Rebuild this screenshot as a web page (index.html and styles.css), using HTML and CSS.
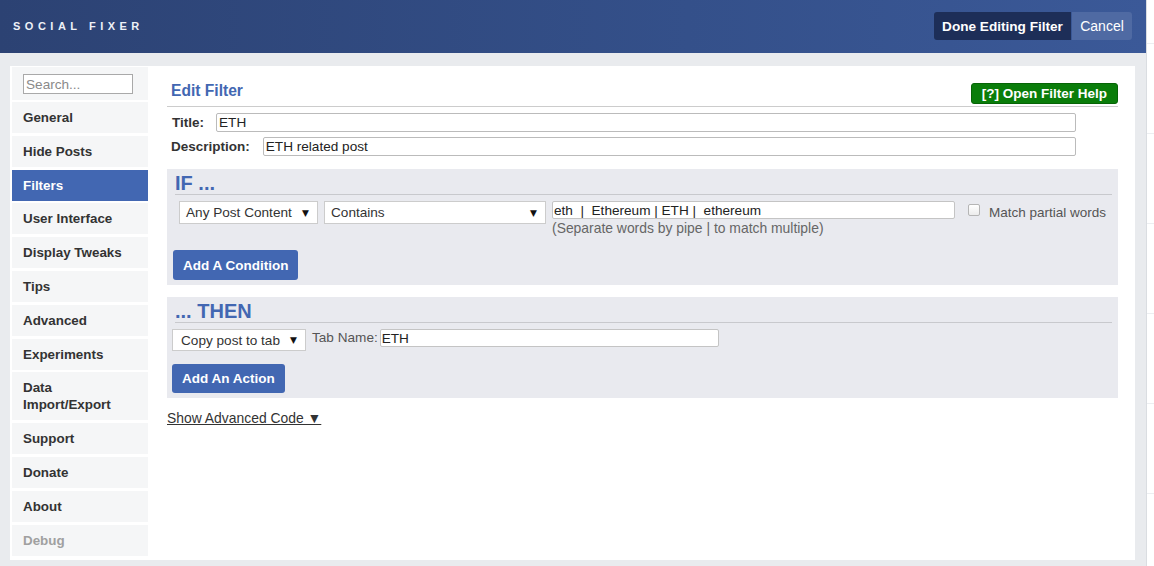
FILE: index.html
```html
<!DOCTYPE html>
<html>
<head>
    <title>Social Fixer - Edit Filter</title>
    <link rel="stylesheet" href="styles.css">
</head>
<body>
    <div class="page">
        <div class="dialog">
            <div class="topbar">
                <div class="brand">SOCIAL FIXER</div>
                <div class="top-actions">
                    <button class="btn-done">Done Editing Filter</button>
                    <button class="btn-cancel">Cancel</button>
                </div>
            </div>

            <div class="dialog-body">
                <div class="panel">
                    <ul class="menu">
                        <li class="menu-search"><input type="text" placeholder="Search..."></li>
                        <li>General</li>
                        <li>Hide Posts</li>
                        <li class="active">Filters</li>
                        <li>User Interface</li>
                        <li>Display Tweaks</li>
                        <li>Tips</li>
                        <li>Advanced</li>
                        <li>Experiments</li>
                        <li>Data<br>Import/Export</li>
                        <li>Support</li>
                        <li>Donate</li>
                        <li>About</li>
                        <li class="muted">Debug</li>
                    </ul>

                    <div class="editor">
                        <div class="editor-head">
                            <h2>Edit Filter</h2>
                            <button class="help-button">[?] Open Filter Help</button>
                        </div>

                        <div class="field-row">
                            <label class="title-label">Title:</label>
                            <input type="text" class="field" value="ETH">
                        </div>
                        <div class="field-row">
                            <label class="desc-label">Description:</label>
                            <input type="text" class="field" value="ETH related post">
                        </div>

                        <div class="block">
                            <h3>IF ...</h3>
                            <div class="condition-row">
                                <div class="select select-target"><span>Any Post Content</span><span class="arrow">&#9660;</span></div>
                                <div class="select select-op"><span>Contains</span><span class="arrow">&#9660;</span></div>
                                <div class="words">
                                    <input type="text" class="words-input" value="eth  |  Ethereum | ETH |  ethereum">
                                    <div class="hint">(Separate words by pipe | to match multiple)</div>
                                </div>
                                <label class="partial"><input type="checkbox"> Match partial words</label>
                            </div>
                            <button class="blue-button">Add A Condition</button>
                        </div>

                        <div class="block">
                            <h3>... THEN</h3>
                            <div class="action-row">
                                <div class="select select-action"><span>Copy post to tab</span><span class="arrow">&#9660;</span></div>
                                <span class="tab-label">Tab Name:</span>
                                <input type="text" class="tab-input" value="ETH">
                            </div>
                            <button class="blue-button">Add An Action</button>
                        </div>

                        <a class="advanced-link" href="#">Show Advanced Code &#9660;</a>
                    </div>
                </div>
            </div>
        </div>

        <div class="backdrop">
            <div class="backdrop-line"></div>
            <div class="backdrop-line"></div>
            <div class="backdrop-line"></div>
            <div class="backdrop-line"></div>
            <div class="backdrop-line"></div>
            <div class="backdrop-line"></div>
        </div>
    </div>
</body>
</html>
```

FILE: styles.css
```css
body {
    margin: 0;
    padding: 0;
    font-family: "Liberation Sans", Arial, sans-serif;
    font-size: 13.6px;
    color: #333;
    background-color: #fff;
    overflow: hidden;
}

.page {
    display: flex;
    height: 566px;
}

.dialog {
    width: 1146px;
    flex-shrink: 0;
    display: flex;
    flex-direction: column;
    background-color: #e9ebee;
}

/* top bar */

.topbar {
    height: 53px;
    display: flex;
    align-items: center;
    justify-content: space-between;
    padding: 0 14px 0 13px;
    background: linear-gradient(to right, #2c4273, #34508a 60%, #3b5998);
}

.brand {
    color: #eef1f7;
    font-size: 11px;
    font-weight: bold;
    letter-spacing: 4.5px;
    margin-top: -1px;
}

.top-actions {
    display: flex;
    margin-top: -1px;
}

.top-actions button {
    height: 28px;
    border: none;
    color: #fff;
    font-family: "Liberation Sans", Arial, sans-serif;
    cursor: pointer;
}

.btn-done {
    width: 137px;
    padding: 0;
    font-size: 13.6px;
    font-weight: bold;
    background-color: #1d2e58;
    border-radius: 3px 0 0 3px;
}

.btn-cancel {
    width: 60px;
    margin-left: 1px;
    padding: 0;
    font-size: 14px;
    background-color: #4f6aa3;
    border-radius: 0 3px 3px 0;
}

/* body */

.dialog-body {
    flex: 1;
    padding: 13px 11px 6px 10px;
    display: flex;
}

.panel {
    flex: 1;
    display: flex;
    align-items: flex-start;
    background-color: #fff;
    padding: 0 17px 0 2px;
    gap: 19px;
}

.menu {
    list-style: none;
    margin: 1px 0 0 0;
    padding: 0;
    width: 136px;
    flex-shrink: 0;
}

.menu li {
    background-color: #f5f6f7;
    padding: 7px 11px;
    line-height: 17px;
    font-size: 13.4px;
    font-weight: bold;
    color: #333;
    margin-bottom: 2.8px;
}

.menu li.menu-search {
    padding: 7px 11px 6px;
    margin-bottom: 2px;
}

.menu-search input {
    display: block;
    width: 110px;
    height: 20px;
    box-sizing: border-box;
    border: 1px solid #a9a9a9;
    padding: 0 2px;
    font-family: "Liberation Sans", Arial, sans-serif;
    font-size: 13.6px;
}

.menu-search input::placeholder {
    color: #8a8a8a;
}

.menu li.active {
    background-color: #4267b2;
    color: #fff;
}

.menu li.muted {
    color: #a0a0a0;
}

/* editor */

.editor {
    width: 951px;
}

.editor-head {
    display: flex;
    justify-content: space-between;
    align-items: flex-end;
    padding-top: 17px;
    padding-bottom: 2px;
    border-bottom: 1px solid #ccc;
}

.editor-head h2 {
    margin: 0 0 0 4px;
    font-size: 15.6px;
    line-height: 16px;
    padding-bottom: 5px;
    color: #4267b2;
}

.help-button {
    height: 21px;
    padding: 0 10px;
    background-color: #0a7d0a;
    border: 1px solid #066406;
    border-radius: 3px;
    color: #fff;
    font-family: "Liberation Sans", Arial, sans-serif;
    font-size: 13.5px;
    font-weight: bold;
    cursor: pointer;
}

.field-row {
    display: flex;
    align-items: center;
    padding: 0 42px 0 5px;
    margin-top: 6px;
}

.field-row + .field-row {
    margin-top: 5px;
}

.field-row label {
    font-weight: bold;
    font-size: 13.5px;
}

.title-label {
    margin-right: 12px;
}

.desc-label {
    margin-right: 13px;
    margin-left: -1px;
}

.field {
    flex: 1;
    height: 19px;
    box-sizing: border-box;
    border: 1px solid #bbb;
    border-radius: 2px;
    padding: 0 2px;
    font-family: "Liberation Sans", Arial, sans-serif;
    font-size: 13.6px;
    color: #222;
}

.block {
    margin-top: 13px;
    background-color: #e9eaef;
    padding: 0 6px 5px 6px;
}

.block + .block {
    margin-top: 12px;
}

.block h3 {
    margin: 0 0 0 2px;
    padding-top: 5px;
    padding-bottom: 2px;
    font-size: 20px;
    line-height: 18px;
    color: #4267b2;
    border-bottom: 1px solid #c8c9cd;
}

.condition-row {
    display: flex;
    align-items: flex-start;
    margin: 6px 0 0 6px;
}

.select {
    display: flex;
    justify-content: space-between;
    align-items: center;
    box-sizing: border-box;
    height: 23px;
    background-color: #fff;
    border: 1px solid #ccc;
    padding: 0 8px 0 6px;
    font-size: 13.6px;
    color: #333;
}

.arrow {
    font-family: "DejaVu Sans", sans-serif;
    font-size: 9px;
    color: #111;
}

.select-target {
    width: 139px;
}

.select-op {
    width: 222px;
    margin-left: 6px;
}

.words {
    margin-left: 6px;
}

.words-input {
    display: block;
    width: 403px;
    height: 18px;
    box-sizing: border-box;
    border: 1px solid #c4c4c4;
    border-radius: 2px;
    padding: 0 1px;
    font-family: "Liberation Sans", Arial, sans-serif;
    font-size: 13.6px;
    color: #222;
}

.hint {
    font-size: 13.9px;
    line-height: 16px;
    margin-top: 1px;
    color: #666;
}

.partial {
    display: flex;
    align-items: flex-start;
    margin-left: 13px;
    margin-top: 3px;
    font-size: 13.5px;
    line-height: 18px;
    color: #555;
}

.partial input {
    appearance: none;
    width: 12px;
    height: 12px;
    margin: 0 9px 0 0;
    border: 1px solid #b5b5b5;
    border-radius: 2px;
    background: linear-gradient(#fff, #ececec);
}

.blue-button {
    display: block;
    height: 30px;
    padding: 0 10px;
    background-color: #4267b2;
    border: none;
    border-radius: 3px;
    color: #fff;
    font-family: "Liberation Sans", Arial, sans-serif;
    font-size: 13.5px;
    font-weight: bold;
    cursor: pointer;
}

.condition-row + .blue-button {
    margin-top: 14px;
}

.action-row {
    display: flex;
    align-items: flex-start;
    margin: 6px 0 0 -1px;
}

.select-action {
    width: 134px;
    height: 22px;
    padding-left: 8px;
}

.tab-label {
    margin-left: 6px;
    line-height: 18px;
    color: #555;
}

.tab-input {
    width: 339px;
    height: 18px;
    box-sizing: border-box;
    margin-left: 2px;
    border: 1px solid #c4c4c4;
    border-radius: 2px;
    padding: 0 1px;
    font-family: "Liberation Sans", Arial, sans-serif;
    font-size: 13.6px;
    color: #222;
}

.action-row + .blue-button {
    margin-top: 13px;
    margin-left: -1px;
    height: 29px;
}

.advanced-link {
    display: inline-block;
    margin-top: 12px;
    color: #333;
    font-size: 13.9px;
    line-height: 16px;
}

/* page behind the dialog */

.backdrop {
    flex: 1;
    border-left: 1px solid #dadde1;
    background-color: #fff;
    padding-top: 43px;
}

.backdrop-line {
    height: 89px;
    border-top: 1px solid #eceef1;
}
```
